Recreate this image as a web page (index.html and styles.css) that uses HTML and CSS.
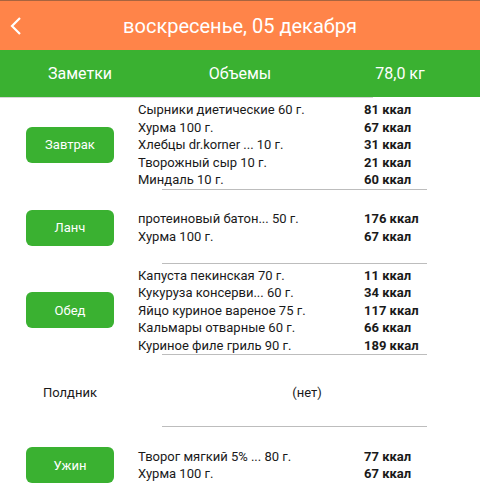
FILE: index.html
```html
<!DOCTYPE html>
<html>
<head>
    <title>Дневник питания</title>
    <link rel="stylesheet" href="styles.css">
</head>
<body>
    <div class="header">
        <svg class="back" width="14" height="20" viewBox="0 0 14 20">
            <path d="M11 2 L3 10 L11 18" fill="none" stroke="#fff" stroke-width="2.2"/>
        </svg>
        <h1>воскресенье, 05 декабря</h1>
    </div>
    <div class="tabs">
        <span>Заметки</span>
        <span>Объемы</span>
        <span>78,0 кг</span>
    </div>
    <div class="tab-shadow"></div>

    <div class="meals">
        <div class="meal">
            <div class="meal-side"><button class="meal-btn">Завтрак</button></div>
            <ul class="items">
                <li><span>Сырники диетические 60 г.</span><b>81 ккал</b></li>
                <li><span>Хурма 100 г.</span><b>67 ккал</b></li>
                <li><span>Хлебцы dr.korner ... 10 г.</span><b>31 ккал</b></li>
                <li><span>Творожный сыр 10 г.</span><b>21 ккал</b></li>
                <li><span>Миндаль 10 г.</span><b>60 ккал</b></li>
            </ul>
        </div>
        <div class="divider"></div>
        <div class="meal">
            <div class="meal-side"><button class="meal-btn">Ланч</button></div>
            <ul class="items">
                <li><span>протеиновый батон... 50 г.</span><b>176 ккал</b></li>
                <li><span>Хурма 100 г.</span><b>67 ккал</b></li>
            </ul>
        </div>
        <div class="divider"></div>
        <div class="meal">
            <div class="meal-side"><button class="meal-btn">Обед</button></div>
            <ul class="items">
                <li><span>Капуста пекинская 70 г.</span><b>11 ккал</b></li>
                <li><span>Кукуруза консерви... 60 г.</span><b>34 ккал</b></li>
                <li><span>Яйцо куриное вареное 75 г.</span><b>117 ккал</b></li>
                <li><span>Кальмары отварные 60 г.</span><b>66 ккал</b></li>
                <li><span>Куриное филе гриль 90 г.</span><b>189 ккал</b></li>
            </ul>
        </div>
        <div class="divider"></div>
        <div class="meal meal-empty">
            <div class="meal-side"><span class="meal-label">Полдник</span></div>
            <div class="empty">(нет)</div>
        </div>
        <div class="divider"></div>
        <div class="meal">
            <div class="meal-side"><button class="meal-btn">Ужин</button></div>
            <ul class="items">
                <li><span>Творог мягкий 5% ... 80 г.</span><b>77 ккал</b></li>
                <li><span>Хурма 100 г.</span><b>67 ккал</b></li>
            </ul>
        </div>
    </div>
</body>
</html>
```

FILE: styles.css
```css
body {
    margin: 0;
    font-family: Roboto, "Liberation Sans", sans-serif;
    background-color: white;
    color: #1a1a1a;
    overflow: hidden;
}
.header {
    height: 49px;
    background-color: #ff8449;
    border-top: 1px solid #a8643f;
    display: flex;
    align-items: center;
    justify-content: center;
    position: relative;
}
.header .back {
    position: absolute;
    left: 9px;
    top: 15px;
}
.header h1 {
    margin: 0;
    color: white;
    font-size: 20px;
    font-weight: normal;
}
.tabs {
    height: 47px;
    background-color: #3ab131;
    display: grid;
    grid-template-columns: 160px 160px 160px;
    align-items: center;
    justify-items: center;
    color: white;
    font-size: 16px;
}
.tab-shadow {
    width: 373px;
    height: 1px;
    background-color: #d6d6d6;
}
.meal {
    display: flex;
    align-items: center;
    min-height: 70px;
    padding-top: 3px;
}
.meal-empty {
    min-height: 68px;
}
.meal-side {
    width: 88px;
    margin-left: 26px;
    margin-right: 24px;
    display: flex;
    justify-content: center;
}
.meal-btn {
    width: 88px;
    height: 36px;
    border: none;
    border-radius: 6px;
    background-color: #3ab131;
    color: white;
    font-family: inherit;
    font-size: 13px;
}
.meal-label {
    font-size: 13px;
}
.items {
    list-style: none;
    margin: 0;
    padding: 0;
    font-size: 13px;
}
.items li {
    display: flex;
    height: 17.5px;
    line-height: 17.5px;
}
.items li span {
    width: 226px;
}
.items li b {
    font-weight: bold;
}
.empty {
    flex: 1;
    text-align: center;
    font-size: 13px;
    margin-right: 4px;
}
.divider {
    width: 265px;
    height: 1px;
    margin-left: 162px;
    background-color: #bdbdbd;
}
```
